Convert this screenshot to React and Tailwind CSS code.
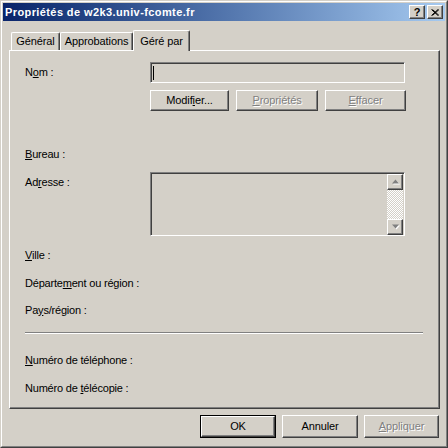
import React from "react";

const U = ({ children }) => <span className="underline underline-offset-[1px] decoration-1">{children}</span>;

const Raised = ({ className = "", children }) => (
  <div className={"border border-t-white border-l-white border-r-[#404040] border-b-[#404040] shadow-[inset_-1px_-1px_0_#808080] bg-[#d4d0c8] flex items-center justify-center " + className}>
    {children}
  </div>
);

const Disabled = ({ children }) => (
  <span className="text-[#808080] [text-shadow:1px_1px_0_#ffffff]">{children}</span>
);

const Label = ({ children, className = "" }) => (
  <div className={"h-[13px] leading-[13px] text-[11px] tracking-[-0.2px] text-black whitespace-nowrap " + className}>{children}</div>
);

const ArrowUp = () => (
  <svg width="9" height="6" viewBox="0 0 9 6">
    <polygon points="4.5,0.5 8,4.5 1,4.5" fill="#ffffff" transform="translate(1,1)" />
    <polygon points="4.5,0.5 8,4.5 1,4.5" fill="#808080" />
  </svg>
);
const ArrowDown = () => (
  <svg width="9" height="6" viewBox="0 0 9 6">
    <polygon points="1,0.5 8,0.5 4.5,4.5" fill="#ffffff" transform="translate(1,1)" />
    <polygon points="1,0.5 8,0.5 4.5,4.5" fill="#808080" />
  </svg>
);

export default function App() {
  return (
    <div className="w-[448px] h-[448px] bg-[#d4d0c8] border border-t-[#d4d0c8] border-l-[#d4d0c8] border-r-[#404040] border-b-[#404040] font-['Liberation_Sans',Arial,sans-serif] text-[11px] text-black">
      <div className="h-full border border-t-white border-l-white border-r-[#808080] border-b-[#808080] p-px flex flex-col">
        {/* Title bar */}
        <div className="h-[18px] shrink-0 bg-linear-to-r from-[#0a246a] to-[#a6caf0] flex items-center justify-between pl-[2px] pr-[2px]">
          <span className="text-white font-bold text-[11px] leading-[13px] tracking-[0.4px] whitespace-nowrap">Propriétés de w2k3.univ-fcomte.fr</span>
          <div className="flex gap-[2px]">
            <Raised className="w-[16px] h-[14px]">
              <span className="font-bold text-[11px] leading-[11px] text-black">?</span>
            </Raised>
            <Raised className="w-[16px] h-[14px]">
              <svg width="8" height="7" viewBox="0 0 8 7">
                <path d="M0.5 0.5 L7 6.5 M1.5 0.5 L8 6.5 M7 0.5 L0.5 6.5 M8 0.5 L1.5 6.5" stroke="#000" strokeWidth="1" fill="none" />
              </svg>
            </Raised>
          </div>
        </div>

        {/* Tabs */}
        <div className="mt-[9px] h-[20px] flex items-end pl-[8px] shrink-0">
          <div className="w-[49px] h-[18px] border-l border-t border-l-white border-t-white border-r border-r-[#404040] shadow-[inset_-1px_0_0_#808080] rounded-tl-[2px] rounded-tr-[2px] flex items-center justify-center text-[11px] tracking-[-0.1px]">
            Général
          </div>
          <div className="w-[73px] h-[18px] border-l border-t border-l-white border-t-white border-r border-r-[#404040] shadow-[inset_-1px_0_0_#808080] rounded-tl-[2px] rounded-tr-[2px] flex items-center justify-center text-[11px] tracking-[-0.1px]">
            Approbations
          </div>
          <div className="relative z-10 w-[57px] h-[21px] mb-[-1px] bg-[#d4d0c8] border-l border-t border-l-white border-t-white border-r border-r-[#404040] shadow-[inset_-1px_0_0_#808080] rounded-tl-[2px] rounded-tr-[2px] flex items-start pt-[2px] justify-center text-[11px] tracking-[-0.1px]">
            Géré par
          </div>
        </div>

        {/* Panel */}
        <div className="ml-[6px] w-[431px] h-[359px] shrink-0 border border-t-white border-l-white border-r-[#404040] border-b-[#404040] shadow-[inset_-1px_-1px_0_#808080] pl-[15px] pt-[11px] flex flex-col">
          {/* Nom */}
          <div className="flex items-center h-[21px]">
            <Label className="w-[125px]">N<U>o</U>m :</Label>
            <div className="w-[255px] h-[21px] border border-t-[#808080] border-l-[#808080] border-r-white border-b-white shadow-[inset_1px_1px_0_#404040] flex items-center pl-[2px]">
              <div className="w-px h-[14px] bg-black"></div>
            </div>
          </div>
          {/* buttons */}
          <div className="flex mt-[7px] ml-[125px] gap-[7px] h-[21px]">
            <Raised className="w-[79px] h-[21px] text-[11px] tracking-[-0.1px]">Modif<U>i</U>er...</Raised>
            <Raised className="w-[82px] h-[21px] text-[11px] tracking-[-0.1px]"><Disabled><U>P</U>ropriétés</Disabled></Raised>
            <Raised className="w-[81px] h-[21px] text-[11px] tracking-[-0.1px]"><Disabled><U>E</U>ffacer</Disabled></Raised>
          </div>
          {/* Bureau */}
          <Label className="mt-[37px]"><U>B</U>ureau :</Label>
          {/* Adresse */}
          <div className="flex mt-[11px] h-[64px]">
            <Label className="w-[125px] mt-[4px]">Ad<U>r</U>esse :</Label>
            <div className="w-[255px] h-[64px] border border-t-[#808080] border-l-[#808080] border-r-white border-b-white shadow-[inset_1px_1px_0_#404040] flex justify-end pt-px pr-px">
              <div className="w-[16px] h-[61px] flex flex-col">
                <Raised className="w-[16px] h-[16px] shrink-0"><ArrowUp /></Raised>
                <div className="flex-1 bg-[repeating-conic-gradient(#ffffff_0_25%,#d4d0c8_0_50%)] bg-[length:2px_2px]"></div>
                <Raised className="w-[16px] h-[16px] shrink-0"><ArrowDown /></Raised>
              </div>
            </div>
          </div>
          <Label className="mt-[13px]"><U>V</U>ille :</Label>
          <Label className="mt-[15px]">Départe<U>m</U>ent ou région :</Label>
          <Label className="mt-[14px]">Pa<U>y</U>s/région :</Label>
          <div className="mt-[15px] w-[398px] h-[2px] border-t border-t-[#808080] border-b border-b-white"></div>
          <Label className="mt-[20px]"><U>N</U>uméro de téléphone :</Label>
          <Label className="mt-[15px]">Numéro de <U>t</U>élécopie :</Label>
        </div>

        {/* Bottom buttons */}
        <div className="mt-[6px] flex justify-end pr-[6px] gap-[6px]">
          <div className="w-[76px] h-[23px] border border-black">
            <Raised className="w-full h-full text-[11px] tracking-[-0.1px]">OK</Raised>
          </div>
          <Raised className="w-[76px] h-[23px] text-[11px] tracking-[-0.1px]">Annuler</Raised>
          <Raised className="w-[75px] h-[23px] text-[11px] tracking-[-0.1px]"><Disabled><U>A</U>ppliquer</Disabled></Raised>
        </div>
      </div>
    </div>
  );
}
